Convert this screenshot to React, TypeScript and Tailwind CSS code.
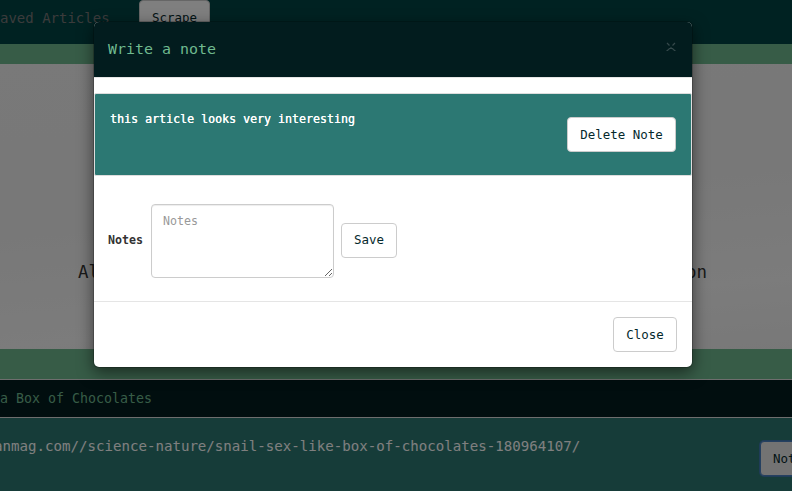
import type { ReactNode } from "react";

function Button({ children, className = "border-[#cccccc] bg-white" }: { children: ReactNode; className?: string }) {
  return (
    <button
      className={`h-[35px] shrink-0 rounded-[4px] border px-3 text-[12.46px] leading-5 whitespace-nowrap text-[#04292c] ${className}`}
    >
      {children}
    </button>
  );
}

function Page() {
  return (
    <div className="flex h-[491px] w-[792px] flex-col overflow-hidden bg-[#6fb98f]">
      <nav className="flex h-11 shrink-0 items-start bg-[#004445]">
        <span className="mt-2 w-[139px] text-[14px] leading-5 whitespace-nowrap text-[#777777]">aved Articles</span>
        <Button>Scrape</Button>
      </nav>
      <header className="mt-5 flex h-[285px] shrink-0 justify-between bg-[linear-gradient(175deg,#f2f2f2,#f0f0f0_45%,#f8f8f8_80%,#f1f1f1)] pr-[85px] pl-[78px] text-[17.44px] leading-[30px] text-[#333333]">
        <span className="mt-[193px]">All</span>
        <span className="mt-[193px]">ion</span>
      </header>
      <section className="mt-[30px] flex flex-1 flex-col border-t border-[#dddddd] bg-[#2c7873]">
        <h3 className="h-[38px] shrink-0 border-b border-[#dddddd] bg-[#021c1e] pt-[9px] text-[13.29px] leading-5 text-[#6fb98f]">
          a Box of Chocolates
        </h3>
        <div className="flex items-start">
          <a className="mt-[18px] -ml-[6px] w-[766px] shrink-0 text-[14.12px] leading-5 whitespace-nowrap text-white">
            anmag.com//science-nature/snail-sex-like-box-of-chocolates-180964107/
          </a>
          <Button className="mt-[23px] border-[#4a80c0] bg-[#e6e6e6] shadow-[0_0_0_1px_#3f78b0]">Note</Button>
        </div>
      </section>
    </div>
  );
}

function NoteModal() {
  return (
    <div className="absolute top-[21px] left-[93px] flex h-[347px] w-[600px] flex-col rounded-[6px] border border-black/20 bg-white bg-clip-padding shadow-[0_5px_15px_rgba(0,0,0,0.5)]">
      <div className="flex h-14 shrink-0 items-start justify-between rounded-t-[5px] border-b border-[#e5e5e5] bg-[#021c1e] pr-[15px] pl-[14px]">
        <h4 className="mt-[15px] text-[14.95px] leading-[25px] text-[#6fb98f]">Write a note</h4>
        <button aria-label="Close dialog" className="mt-[19px] text-[#35494b]">
          <svg width="12" height="12" viewBox="0 0 12 12" fill="none" stroke="currentColor" strokeWidth="1.2">
            <path d="M2 2l2.5 2.5M10 2L7.5 4.5M1.5 9.5h1l2-2h1l.5-.8.5.8h1l2 2h1" />
          </svg>
        </button>
      </div>
      <div className="mt-[15px] flex h-[83px] shrink-0 items-start justify-between rounded-[2px] border border-[#dddddd] bg-[#2c7873] pr-[15px] pl-[15px]">
        <p className="mt-[15px] text-[11.63px] leading-5 text-white [text-shadow:0.15px_0_0_#ffffff]">this article looks very interesting</p>
        <Button className="mt-[23px] w-[109px] border-[#cccccc] bg-white">Delete Note</Button>
      </div>
      <form className="mt-[28px] flex h-[74px] shrink-0 items-center pl-[14px]">
        <label className="mr-2 w-[35px] text-[11.63px] font-bold text-[#333333]">Notes</label>
        <textarea
          placeholder="Notes"
          className="mr-[7px] h-[74px] w-[183px] resize rounded-[4px] border border-[#cccccc] bg-white px-[11px] py-[6px] text-[11.63px] leading-5 shadow-[inset_0_1px_1px_rgba(0,0,0,0.075)] placeholder:text-[#999999]"
        />
        <Button className="mb-[2px] border-[#cccccc] bg-white">Save</Button>
      </form>
      <div className="mt-[23px] flex flex-1 items-start justify-end border-t border-[#e5e5e5] pt-[15px] pr-[15px]">
        <Button className="w-16 border-[#cccccc] bg-white">Close</Button>
      </div>
    </div>
  );
}

export default function App() {
  return (
    <main className="relative h-[491px] w-[792px] overflow-hidden font-['DejaVu_Sans_Mono',monospace]">
      <Page />
      <div className="absolute inset-0 bg-black/50" />
      <NoteModal />
    </main>
  );
}
